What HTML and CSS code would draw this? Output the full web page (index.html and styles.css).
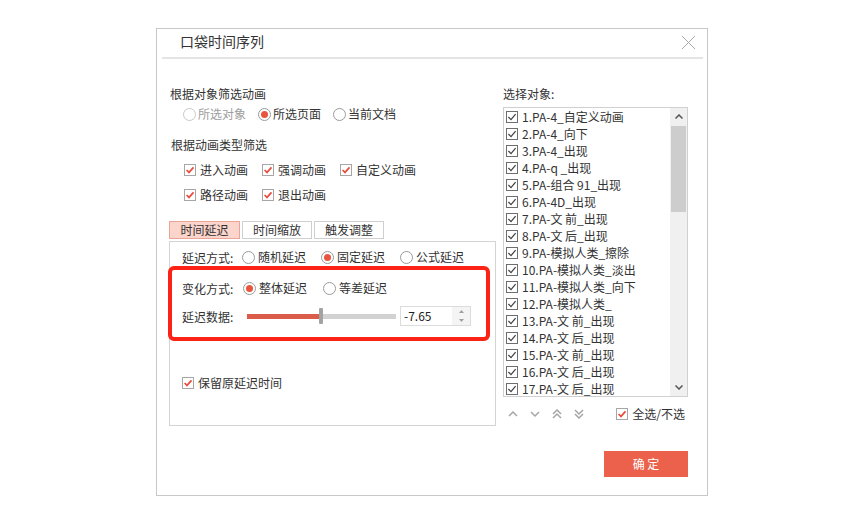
FILE: index.html
```html
<!DOCTYPE html>
<html lang="zh-CN">
<head>
<meta charset="utf-8">
<title>口袋时间序列</title>
<link rel="stylesheet" href="styles.css">
</head>
<body>
<div class="dialog">
  <div class="titlebar">
    <span class="title">口袋时间序列</span>
    <svg class="close" width="15" height="15" viewBox="0 0 15 15"><path d="M1 1L14 14M14 1L1 14"/></svg>
  </div>
  <div class="sep"></div>
  <div class="body">
    <div class="left">
      <div class="heading">根据对象筛选动画</div>
      <div class="radios r-top">
        <label class="radio disabled"><span class="circle"></span>所选对象</label>
        <label class="radio on"><span class="circle"></span>所选页面</label>
        <label class="radio"><span class="circle"></span>当前文档</label>
      </div>
      <div class="heading h2">根据动画类型筛选</div>
      <div class="checks">
        <label class="cb"><svg class="box" viewBox="0 0 12 12"><rect x="0.5" y="0.5" width="11" height="11"/><path d="M2.6 6L5 8.4L9.5 3.4"/></svg>进入动画</label>
        <label class="cb"><svg class="box" viewBox="0 0 12 12"><rect x="0.5" y="0.5" width="11" height="11"/><path d="M2.6 6L5 8.4L9.5 3.4"/></svg>强调动画</label>
        <label class="cb"><svg class="box" viewBox="0 0 12 12"><rect x="0.5" y="0.5" width="11" height="11"/><path d="M2.6 6L5 8.4L9.5 3.4"/></svg>自定义动画</label>
        <label class="cb"><svg class="box" viewBox="0 0 12 12"><rect x="0.5" y="0.5" width="11" height="11"/><path d="M2.6 6L5 8.4L9.5 3.4"/></svg>路径动画</label>
        <label class="cb"><svg class="box" viewBox="0 0 12 12"><rect x="0.5" y="0.5" width="11" height="11"/><path d="M2.6 6L5 8.4L9.5 3.4"/></svg>退出动画</label>
      </div>
      <div class="tabs">
        <div class="tab active">时间延迟</div>
        <div class="tab">时间缩放</div>
        <div class="tab">触发调整</div>
      </div>
      <div class="panel">
        <div class="prow">
          <span class="lbl">延迟方式:</span>
          <div class="radios g15">
            <label class="radio"><span class="circle"></span>随机延迟</label>
            <label class="radio on"><span class="circle"></span>固定延迟</label>
            <label class="radio"><span class="circle"></span>公式延迟</label>
          </div>
        </div>
        <div class="prow p2">
          <span class="lbl l61">变化方式:</span>
          <div class="radios g16">
            <label class="radio on"><span class="circle"></span>整体延迟</label>
            <label class="radio"><span class="circle"></span>等差延迟</label>
          </div>
        </div>
        <div class="prow p3">
          <span class="lbl">延迟数据:</span>
          <div class="slider">
            <div class="track"><div class="fill" style="width:72px"></div></div>
            <div class="thumb" style="left:72px"></div>
          </div>
          <div class="spin">
            <span class="val">-7.65</span>
            <span class="spinbtns">
              <svg width="5" height="3" viewBox="0 0 5 3"><path d="M0 3L2.5 0L5 3Z"/></svg>
              <svg width="5" height="3" viewBox="0 0 5 3"><path d="M0 0L2.5 3L5 0Z"/></svg>
            </span>
          </div>
        </div>
        <label class="cb keep"><svg class="box" viewBox="0 0 12 12"><rect x="0.5" y="0.5" width="11" height="11"/><path d="M2.6 6L5 8.4L9.5 3.4"/></svg>保留原延迟时间</label>
      </div>
    </div>
    <div class="right">
      <div class="rlabel">选择对象:</div>
      <div class="list">
        <div class="items">
          <div class="item"><svg class="box" viewBox="0 0 12 12"><rect x="0.5" y="0.5" width="11" height="11"/><path d="M2.4 6L5 8.6L9.6 3.2"/></svg>1.PA-4_自定义动画</div>
          <div class="item"><svg class="box" viewBox="0 0 12 12"><rect x="0.5" y="0.5" width="11" height="11"/><path d="M2.4 6L5 8.6L9.6 3.2"/></svg>2.PA-4_向下</div>
          <div class="item"><svg class="box" viewBox="0 0 12 12"><rect x="0.5" y="0.5" width="11" height="11"/><path d="M2.4 6L5 8.6L9.6 3.2"/></svg>3.PA-4_出现</div>
          <div class="item"><svg class="box" viewBox="0 0 12 12"><rect x="0.5" y="0.5" width="11" height="11"/><path d="M2.4 6L5 8.6L9.6 3.2"/></svg>4.PA-q _出现</div>
          <div class="item"><svg class="box" viewBox="0 0 12 12"><rect x="0.5" y="0.5" width="11" height="11"/><path d="M2.4 6L5 8.6L9.6 3.2"/></svg>5.PA-组合 91_出现</div>
          <div class="item"><svg class="box" viewBox="0 0 12 12"><rect x="0.5" y="0.5" width="11" height="11"/><path d="M2.4 6L5 8.6L9.6 3.2"/></svg>6.PA-4D_出现</div>
          <div class="item"><svg class="box" viewBox="0 0 12 12"><rect x="0.5" y="0.5" width="11" height="11"/><path d="M2.4 6L5 8.6L9.6 3.2"/></svg>7.PA-文 前_出现</div>
          <div class="item"><svg class="box" viewBox="0 0 12 12"><rect x="0.5" y="0.5" width="11" height="11"/><path d="M2.4 6L5 8.6L9.6 3.2"/></svg>8.PA-文 后_出现</div>
          <div class="item"><svg class="box" viewBox="0 0 12 12"><rect x="0.5" y="0.5" width="11" height="11"/><path d="M2.4 6L5 8.6L9.6 3.2"/></svg>9.PA-模拟人类_擦除</div>
          <div class="item"><svg class="box" viewBox="0 0 12 12"><rect x="0.5" y="0.5" width="11" height="11"/><path d="M2.4 6L5 8.6L9.6 3.2"/></svg>10.PA-模拟人类_淡出</div>
          <div class="item"><svg class="box" viewBox="0 0 12 12"><rect x="0.5" y="0.5" width="11" height="11"/><path d="M2.4 6L5 8.6L9.6 3.2"/></svg>11.PA-模拟人类_向下</div>
          <div class="item"><svg class="box" viewBox="0 0 12 12"><rect x="0.5" y="0.5" width="11" height="11"/><path d="M2.4 6L5 8.6L9.6 3.2"/></svg>12.PA-模拟人类_</div>
          <div class="item"><svg class="box" viewBox="0 0 12 12"><rect x="0.5" y="0.5" width="11" height="11"/><path d="M2.4 6L5 8.6L9.6 3.2"/></svg>13.PA-文 前_出现</div>
          <div class="item"><svg class="box" viewBox="0 0 12 12"><rect x="0.5" y="0.5" width="11" height="11"/><path d="M2.4 6L5 8.6L9.6 3.2"/></svg>14.PA-文 后_出现</div>
          <div class="item"><svg class="box" viewBox="0 0 12 12"><rect x="0.5" y="0.5" width="11" height="11"/><path d="M2.4 6L5 8.6L9.6 3.2"/></svg>15.PA-文 前_出现</div>
          <div class="item"><svg class="box" viewBox="0 0 12 12"><rect x="0.5" y="0.5" width="11" height="11"/><path d="M2.4 6L5 8.6L9.6 3.2"/></svg>16.PA-文 后_出现</div>
          <div class="item"><svg class="box" viewBox="0 0 12 12"><rect x="0.5" y="0.5" width="11" height="11"/><path d="M2.4 6L5 8.6L9.6 3.2"/></svg>17.PA-文 后_出现</div>
        </div>
        <div class="scroll">
          <div class="sarrow"><svg width="8" height="5" viewBox="0 0 8 5"><path d="M0.5 4.5L4 1L7.5 4.5"/></svg></div>
          <div class="sthumb"></div>
          <div class="sspace"></div>
          <div class="sarrow"><svg width="8" height="5" viewBox="0 0 8 5"><path d="M0.5 0.5L4 4L7.5 0.5"/></svg></div>
        </div>
      </div>
      <div class="below">
        <div class="moves">
          <svg width="10" height="10" viewBox="0 0 10 10"><path d="M1 7L5 3L9 7"/></svg>
          <svg width="10" height="10" viewBox="0 0 10 10"><path d="M1 3L5 7L9 3"/></svg>
          <svg width="10" height="10" viewBox="0 0 10 10"><path d="M1 5L5 1L9 5M1 9L5 5L9 9"/></svg>
          <svg width="10" height="10" viewBox="0 0 10 10"><path d="M1 1L5 5L9 1M1 5L5 9L9 5"/></svg>
        </div>
        <label class="cb all"><svg class="box" viewBox="0 0 12 12"><rect x="0.5" y="0.5" width="11" height="11"/><path d="M2.6 6L5 8.4L9.5 3.4"/></svg>全选/不选</label>
      </div>
      <div class="btn">确 定</div>
    </div>
  </div>
  <div class="mark"></div>
</div>
</body>
</html>
```
FILE: styles.css
```css
body {
  margin: 0;
  background: #fff;
  font-family: "Noto Sans CJK SC", "Microsoft YaHei", sans-serif;
  font-size: 12px;
  color: #333;
}

.dialog {
  position: relative;
  box-sizing: border-box;
  width: 552px;
  height: 468px;
  margin: 28px 0 0 156px;
  border: 1px solid #c8c8c8;
  background: #fff;
}

.titlebar {
  height: 28px;
  display: flex;
  align-items: flex-start;
  justify-content: space-between;
}

.title {
  font-size: 14px;
  line-height: 18px;
  margin: 3px 0 0 23px;
  color: #333;
}

.close {
  margin: 6px 11px 0 0;
}

.close path {
  stroke: #a8a8a8;
  stroke-width: 1;
  fill: none;
}

.sep {
  height: 2px;
  background: #e4e4e4;
  margin: 0 4px 0 5px;
}

.body {
  display: flex;
  padding-left: 12px;
  gap: 7px;
}

.left {
  width: 327px;
}

.heading {
  line-height: 18px;
  margin-top: 26px;
  padding-left: 1px;
}

.radios {
  display: flex;
  line-height: 18px;
}

.r-top {
  margin-top: 2px;
  padding-left: 14px;
  gap: 12px;
}

.radio {
  display: flex;
  align-items: center;
  gap: 2px;
  white-space: nowrap;
}

.circle {
  width: 13px;
  height: 13px;
  box-sizing: border-box;
  border: 1px solid #9a9a9a;
  border-radius: 50%;
  background: #fff;
  display: flex;
  align-items: center;
  justify-content: center;
  flex: none;
}

.radio.on .circle::after {
  content: "";
  width: 7px;
  height: 7px;
  border-radius: 50%;
  background: #e8553f;
}

.radio.disabled {
  color: #9d9d9d;
}

.radio.disabled .circle {
  border-color: #c8c8c8;
}

.h2 {
  margin-top: 13px;
  padding-left: 2px;
}

.checks {
  display: grid;
  grid-template-columns: 78px 78px auto;
  row-gap: 7px;
  margin-top: 7px;
  padding-left: 15px;
  line-height: 18px;
}

.cb {
  display: flex;
  align-items: center;
  gap: 4px;
  line-height: 18px;
  white-space: nowrap;
}

.box {
  width: 12px;
  height: 12px;
  flex: none;
}

.box rect {
  fill: #fff;
  stroke: #a6a6a6;
}

.box path {
  fill: none;
  stroke: #e84d3d;
  stroke-width: 1.7;
}

.tabs {
  display: flex;
  gap: 2px;
  margin-top: 17px;
}

.tab {
  box-sizing: border-box;
  width: 70px;
  height: 18px;
  border: 1px solid #cfcfcf;
  text-align: center;
  line-height: 16px;
  background: #fff;
}

.tab.active {
  width: 71px;
  background: #fbd4cb;
  border-color: #eba496;
}

.panel {
  box-sizing: border-box;
  margin-top: 2px;
  height: 185px;
  border: 1px solid #d4d4d4;
  padding: 6px 0 0 12px;
}

.prow {
  display: flex;
  align-items: center;
  height: 18px;
}

.lbl {
  width: 60px;
  flex: none;
}

.l61 {
  width: 61px;
}

.g15 {
  gap: 15px;
}

.g16 {
  gap: 16px;
}

.g15 .radio,
.g16 .radio {
  gap: 3px;
}

.p2 {
  margin-top: 13px;
}

.p3 {
  margin-top: 9px;
  height: 20px;
}

.slider {
  position: relative;
  width: 149px;
  height: 16px;
  margin-left: 5px;
  display: flex;
  align-items: center;
}

.track {
  width: 100%;
  height: 5px;
  background: #d2d2d2;
}

.fill {
  height: 5px;
  background: #dc5c4a;
}

.thumb {
  position: absolute;
  top: 0;
  width: 4px;
  height: 16px;
  border-radius: 1px;
  background: #a3a3a3;
}

.spin {
  box-sizing: border-box;
  display: flex;
  width: 71px;
  height: 20px;
  margin-left: 4px;
  border: 1px solid #dcdcdc;
  background: #fff;
}

.val {
  flex: 1;
  padding-left: 3px;
  line-height: 18px;
  color: #222;
}

.spinbtns {
  width: 18px;
  background: #f4f4f4;
  display: flex;
  flex-direction: column;
  align-items: center;
  justify-content: center;
  gap: 6px;
}

.spinbtns path {
  fill: #a0a0a0;
}

.keep {
  margin-top: 48px;
}

.right {
  width: 185px;
}

.rlabel {
  margin-top: 26px;
  line-height: 18px;
}

.list {
  box-sizing: border-box;
  margin-top: 4px;
  height: 290px;
  border: 1px solid #d0d0d0;
  display: flex;
}

.items {
  flex: 1;
  overflow: hidden;
  padding-left: 2px;
}

.item {
  height: 17px;
  display: flex;
  align-items: center;
  gap: 4px;
  white-space: nowrap;
  color: #333;
}

.item .box rect {
  stroke: #6e6e6e;
}

.item .box path {
  stroke: #444;
  stroke-width: 1.3;
}

.scroll {
  width: 17px;
  background: #f0f0f0;
  display: flex;
  flex-direction: column;
}

.sarrow {
  height: 17px;
  display: flex;
  align-items: center;
  justify-content: center;
}

.sarrow path {
  fill: none;
  stroke: #555;
  stroke-width: 1.5;
}

.sthumb {
  height: 86px;
  margin: 1px 1px 0;
  background: #cdcdcd;
}

.sspace {
  flex: 1;
}

.below {
  display: flex;
  align-items: center;
  justify-content: space-between;
  height: 18px;
  margin-top: 8px;
  padding-right: 3px;
}

.moves {
  display: flex;
  gap: 12px;
  padding-left: 5px;
}

.moves path {
  fill: none;
  stroke: #a5a5a5;
  stroke-width: 1.5;
}

.btn {
  margin: 28px 0 0 auto;
  width: 84px;
  height: 26px;
  background: #eb614b;
  color: #fff;
  line-height: 26px;
  text-align: center;
}

.mark {
  position: absolute;
  left: 11px;
  top: 237px;
  width: 322px;
  height: 75px;
  box-sizing: border-box;
  border: 4px solid #fb2216;
  border-radius: 6px;
}
```
